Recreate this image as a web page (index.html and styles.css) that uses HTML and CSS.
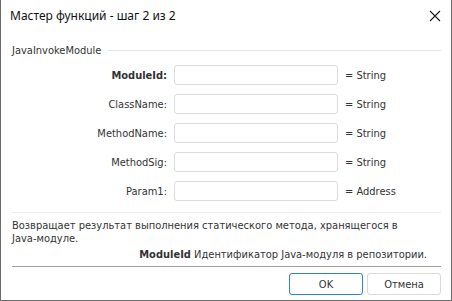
FILE: index.html
```html
<!DOCTYPE html>
<html lang="ru">
<head>
    <meta charset="UTF-8" />
    <title>Мастер функций</title>
    <link rel="stylesheet" href="styles.css">
</head>
<body>
<div class="window">
    <div class="titlebar">
        <span class="title">Мастер функций - шаг 2 из 2</span>
        <svg class="close" width="12" height="12" viewBox="0 0 12 12">
            <path d="M1 1 L11 11 M11 1 L1 11" stroke="#1a1a1a" stroke-width="1.1" fill="none"/>
        </svg>
    </div>

    <div class="content">
        <div class="group-head">
            <span>JavaInvokeModule</span>
            <div class="group-line"></div>
        </div>

        <div class="params">
            <label class="bold">ModuleId:</label>
            <input type="text">
            <span class="type">= String</span>

            <label>ClassName:</label>
            <input type="text">
            <span class="type">= String</span>

            <label>MethodName:</label>
            <input type="text">
            <span class="type">= String</span>

            <label>MethodSig:</label>
            <input type="text">
            <span class="type">= String</span>

            <label>Param1:</label>
            <input type="text">
            <span class="type">= Address</span>
        </div>

        <div class="sep-light"></div>

        <p class="desc">Возвращает результат выполнения статического метода, хранящегося в Java-модуле.</p>
        <p class="param-help"><b>ModuleId</b> Идентификатор Java-модуля в репозитории.</p>

        <div class="sep-dark"></div>

        <div class="buttons">
            <button class="primary">OK</button>
            <button>Отмена</button>
        </div>
    </div>
</div>
</body>
</html>
```

FILE: styles.css
```css
body {
  margin: 0;
  font-family: "DejaVu Sans Condensed", "DejaVu Sans", Tahoma, sans-serif;
  font-size: 11px;
  color: #333;
  background: #fff;
}
.window {
  width: 452px;
  height: 301px;
  box-sizing: border-box;
  border: 1px solid #6b6b6b;
  border-top: none;
  background: #fff;
}
.titlebar {
  height: 31px;
  display: flex;
  align-items: center;
  justify-content: space-between;
  padding: 0 10px 1px 9px;
}
.title {
  font-family: "Noto Sans", "Open Sans", sans-serif;
  font-size: 12px;
  color: #111;
}
.content {
  padding: 0 10px 0 11px;
}
.group-head {
  display: flex;
  align-items: center;
  height: 14px;
  margin-top: 11px;
  gap: 7px;
}
.group-line {
  flex: 1;
  height: 1px;
  background: #e6e6e6;
}
.params {
  display: grid;
  grid-template-columns: 155px 164px auto;
  column-gap: 7px;
  row-gap: 9px;
  align-items: center;
  margin-top: 8px;
}
.params label {
  text-align: right;
}
.params label.bold {
  font-weight: bold;
}
.params input {
  box-sizing: border-box;
  height: 20px;
  width: 164px;
  border: 1px solid #dcdcdc;
  border-radius: 3px;
  margin: 0;
}
.sep-light {
  height: 1px;
  background: #ececec;
  margin-top: 11px;
}
.desc {
  margin: 6px 0 0;
  line-height: 13px;
  width: 395px;
}
.param-help {
  margin: 3px 14px 0 0;
  text-align: right;
  line-height: 14px;
}
.sep-dark {
  height: 1px;
  background: #a0a0a0;
  margin-top: 4px;
}
.buttons {
  display: flex;
  justify-content: flex-end;
  gap: 4px;
  margin-top: 6px;
}
button {
  width: 74px;
  height: 22px;
  font-family: "DejaVu Sans Condensed", "DejaVu Sans", Tahoma, sans-serif;
  font-size: 11px;
  color: #333;
  background: #fff;
  border: 1px solid #dadada;
  border-radius: 3px;
}
button.primary {
  border-color: #2b86d8;
}
```
